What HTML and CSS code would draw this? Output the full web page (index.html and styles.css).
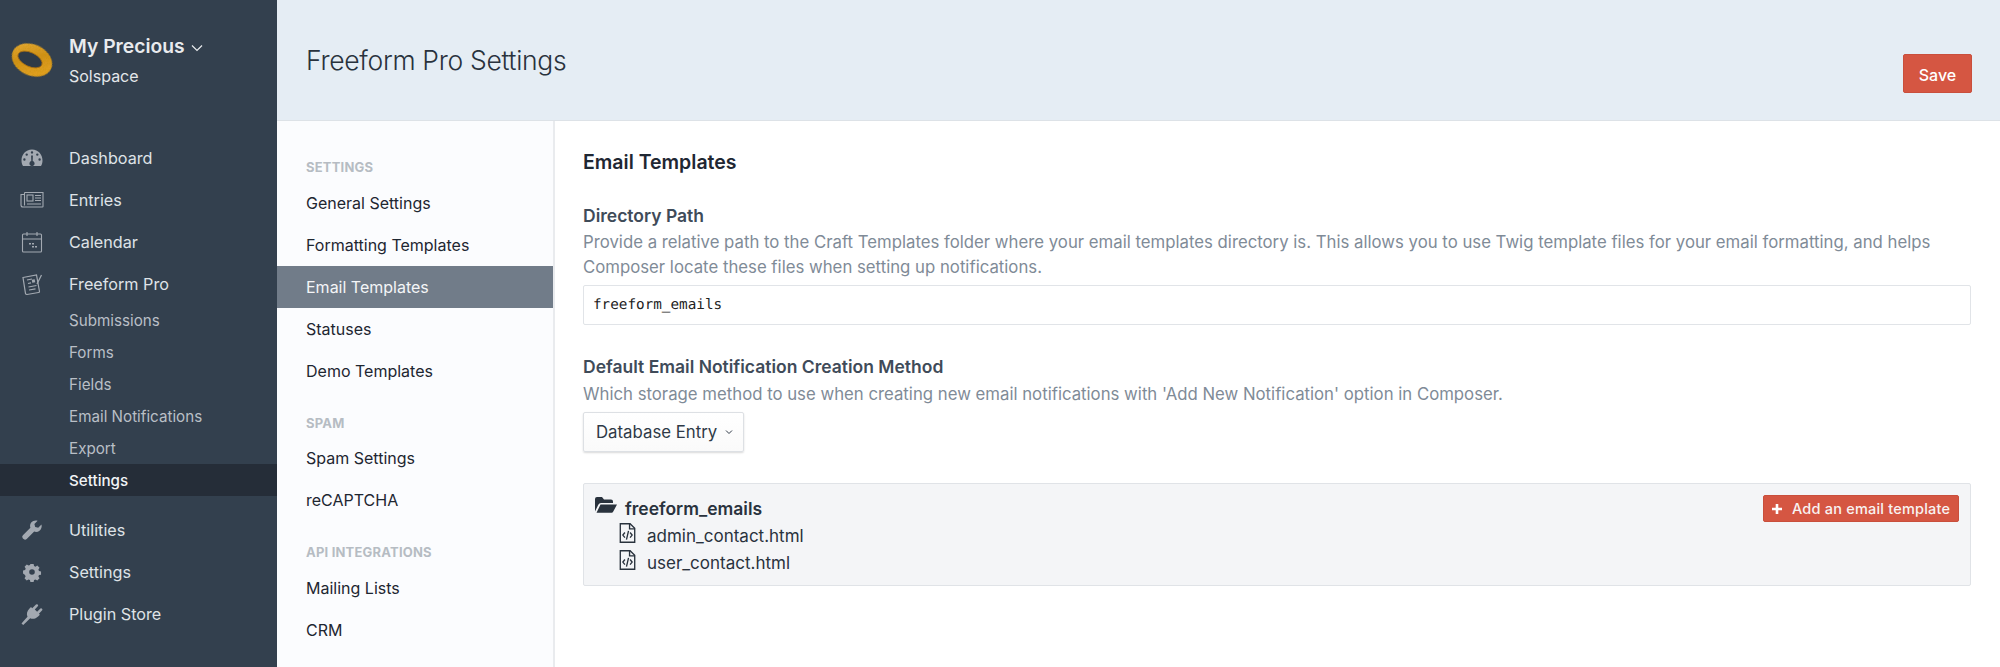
FILE: index.html
```html
<!DOCTYPE html>
<html lang="en">
<head>
<meta charset="utf-8">
<title>Freeform Pro Settings</title>
<link rel="stylesheet" href="styles.css">
</head>
<body>
<div class="app">
  <aside class="sidebar">
    <div class="brand">
      <svg class="ring" viewBox="0 0 45 42">
        <defs>
          <linearGradient id="gold" x1="0" y1="0" x2="1" y2="1"><stop offset="0" stop-color="#eeb23c"/><stop offset=".45" stop-color="#d0901c"/><stop offset=".8" stop-color="#e2a024"/><stop offset="1" stop-color="#b87a14"/></linearGradient>
          <filter id="grain" x="0" y="0" width="100%" height="100%"><feTurbulence type="fractalNoise" baseFrequency="1.100" numOctaves="2" seed="4"/><feColorMatrix values="0 0 0 0 .55  0 0 0 0 .3  0 0 0 0 0  0 0 0 1.400 -.55"/><feComposite in2="SourceAlpha" operator="in"/><feMerge><feMergeNode in="SourceGraphic"/><feMergeNode/></feMerge></filter>
        </defs>
        <ellipse cx="23" cy="19" rx="21" ry="15.500" transform="rotate(25 23 19)" fill="url(#gold)" filter="url(#grain)"/>
        <ellipse cx="21" cy="18.500" rx="13" ry="7" transform="rotate(25 21 18.500)" fill="#2e3a47" stroke="#a86f12" stroke-width=".8"/>
      </svg>
      <div class="brand-text">
        <div class="brand-name">My Precious <svg class="caret" viewBox="0 0 12 8"><path d="M1 1.500l5 5 5-5" fill="none" stroke="currentColor" stroke-width="1.200"/></svg></div>
        <div class="brand-org">Solspace</div>
      </div>
    </div>
    <nav class="main-nav">
      <a class="nav-item"><svg class="nav-icon" viewBox="0 0 24 24"><path fill="#a3a9b1" fill-rule="evenodd" d="M12 3.500C5.600 3.500 1.500 8.600 1.500 14.500c0 2 .5 3.700 1.200 5 .2.400.6.500 1 .5h16.600c.4 0 .8-.1 1-.5.7-1.300 1.200-3 1.200-5 0-5.900-4.100-11-10.500-11zM12 5.200a1.200 1.200 0 1 1 0 2.400 1.200 1.200 0 0 1 0-2.400zM6.700 7.400a1.200 1.200 0 1 1 0 2.400 1.200 1.200 0 0 1 0-2.400zM17.300 7.400a1.200 1.200 0 1 1 0 2.400 1.200 1.200 0 0 1 0-2.400zM4.400 12.300a1.200 1.200 0 1 1 0 2.400 1.200 1.200 0 0 1 0-2.400zM19.600 12.300a1.200 1.200 0 1 1 0 2.400 1.200 1.200 0 0 1 0-2.400zM12.900 9.500l-.2 5.600a2.600 2.600 0 1 1-1.400 0l-.2-5.600z"/></svg>Dashboard</a>
      <a class="nav-item"><svg class="nav-icon" viewBox="0 0 24 24"><g fill="none" stroke="#a3a9b1" stroke-width="1.100"><path d="M4.500 4.500h18.500v14a.5.5 0 0 1-.5.5H3a2 2 0 0 1-2-2V6.500h3.500"/><path d="M4.500 4.500v13"/><rect x="7" y="7" width="6" height="6"/><path d="M15 7.500h6M15 10h6M15 12.500h6M7 16h14"/></g></svg>Entries</a>
      <a class="nav-item"><svg class="nav-icon" viewBox="0 0 24 24"><g fill="none" stroke="#a3a9b1" stroke-width="1.100"><rect x="2.500" y="4" width="19" height="18" rx="1"/><path d="M2.500 9h19M7 2v4M17 2v4"/></g><path fill="#a3a9b1" d="M9 13h2v1.500H9zM12 13h2v1.500h-2zM12 16h2v1.500h-2zM15 16h2v1.500h-2z"/></svg>Calendar</a>
      <a class="nav-item"><svg class="nav-icon" viewBox="0 0 24 24"><g fill="none" stroke="#a3a9b1" stroke-width="1.200"><path d="M3 5.500L16.500 3l3 16.500a1 1 0 0 1-1 1L7 22.500a1.500 1.500 0 0 1-1.500-1z"/><path d="M7 8l5-1M8 11.500l3-.6M8.500 15l8-1.500M9 18l6.500-1.200"/><path d="M17 12L21.500 3"/></g><rect fill="#a3a9b1" x="12" y="7.500" width="3" height="3" transform="rotate(-10 13.500 9)"/></svg>Freeform Pro</a>
      <div class="sub-list">
        <a class="sub-item">Submissions</a>
        <a class="sub-item">Forms</a>
        <a class="sub-item">Fields</a>
        <a class="sub-item">Email Notifications</a>
        <a class="sub-item">Export</a>
        <a class="sub-item sub-active">Settings</a>
      </div>
      <a class="nav-item"><svg class="nav-icon" viewBox="0 0 24 24"><path fill="#a3a9b1" d="M21.500 6.500l-3.300 3.200-3-.8-.8-3L17.600 2.700c-2.300-.7-5 0-6.400 1.900-1.200 1.500-1.400 3.500-.8 5.200L2.900 17.300a2.200 2.200 0 0 0 0 3.100l.7.700a2.200 2.200 0 0 0 3.100 0l7.500-7.500c1.800.6 3.800.3 5.300-.9 1.900-1.500 2.600-4 2-6.200z"/></svg>Utilities</a>
      <a class="nav-item"><svg class="nav-icon" viewBox="-3 -3 30 30"><path fill="#a3a9b1" fill-rule="evenodd" d="M10 3h4l.6 2.600 1.700.7 2.300-1.400 2.800 2.800-1.400 2.300.7 1.700 2.600.6v4l-2.600.6-.7 1.700 1.400 2.300-2.800 2.800-2.300-1.400-1.700.7-.6 2.600h-4l-.6-2.600-1.700-.7-2.300 1.400-2.800-2.800 1.400-2.300-.7-1.700L.8 15v-4l2.600-.6.7-1.700-1.400-2.300 2.800-2.800 2.300 1.400 1.700-.7zM12 9.500a3.500 3.500 0 1 0 0 7 3.500 3.500 0 0 0 0-7z" transform="translate(0 -1)"/></svg>Settings</a>
      <a class="nav-item"><svg class="nav-icon" viewBox="0 0 24 24"><path fill="#a3a9b1" d="M16 2.500a1.300 1.300 0 0 1 2 1.600l-3.200 3.500 2.300 2.200 3.300-3.300a1.300 1.300 0 0 1 1.800 1.800l-3.300 3.400 1 1-1.500 1.500c-2.500 2.500-5.700 3.200-8.200 2L6.400 20l-3.200 3-1.700-1.600 3-3.400 3-3.200c-1.200-2.500-.5-5.700 2-8.200l1.500-1.500 1.200 1.100z"/></svg>Plugin Store</a>
    </nav>
  </aside>
  <div class="page">
    <header class="page-header">
      <h1 class="page-title">Freeform Pro Settings</h1>
      <button class="btn-save">Save</button>
    </header>
    <div class="page-body">
      <nav class="side-tabs">
        <div class="tab-heading">SETTINGS</div>
        <a class="tab">General Settings</a>
        <a class="tab">Formatting Templates</a>
        <a class="tab tab-active">Email Templates</a>
        <a class="tab">Statuses</a>
        <a class="tab">Demo Templates</a>
        <div class="tab-heading">SPAM</div>
        <a class="tab">Spam Settings</a>
        <a class="tab">reCAPTCHA</a>
        <div class="tab-heading tab-heading-api">API INTEGRATIONS</div>
        <a class="tab">Mailing Lists</a>
        <a class="tab">CRM</a>
      </nav>
      <main class="content">
        <h2 class="section-title">Email Templates</h2>
        <div class="field">
          <div class="field-label">Directory Path</div>
          <p class="field-help">Provide a relative path to the Craft Templates folder where your email templates directory is. This allows you to use Twig template files for your email formatting, and helps Composer locate these files when setting up notifications.</p>
          <input class="text-input" type="text" value="freeform_emails">
        </div>
        <div class="field">
          <div class="field-label">Default Email Notification Creation Method</div>
          <p class="field-help">Which storage method to use when creating new email notifications with 'Add New Notification' option in Composer.</p>
          <div class="select-btn">Database Entry <svg class="select-caret" viewBox="0 0 8 6"><path d="M1 1.500l3 3 3-3" fill="none" stroke="currentColor" stroke-width="1"/></svg></div>
        </div>
        <section class="files">
          <div class="files-list">
            <div class="folder"><svg class="folder-icon" viewBox="0 0 22 18"><path fill="#29323d" d="M0 3a2 2 0 0 1 2-2h5l2 2.500h7a2 2 0 0 1 2 2V7H6a3 3 0 0 0-2.700 1.700L0 15.500z"/><path fill="#29323d" d="M5.500 8.500H22l-4 7.500a1.500 1.500 0 0 1-1.300.8H1.500z"/></svg>freeform_emails</div>
            <div class="file"><svg class="file-icon" viewBox="0.300 0.300 15.400 19.400"><g fill="none" stroke="#29323d" stroke-width="1.300"><path d="M1 1h9.500L15 5.500V19H1z"/><path d="M10 1v5h5"/><path d="M5.500 9.500L3.500 12l2 2.500M10.500 9.500l2 2.500-2 2.500M9 8l-2 8.500"/></g></svg>admin_contact.html</div>
            <div class="file"><svg class="file-icon" viewBox="0.300 0.300 15.400 19.400"><g fill="none" stroke="#29323d" stroke-width="1.300"><path d="M1 1h9.500L15 5.500V19H1z"/><path d="M10 1v5h5"/><path d="M5.500 9.500L3.500 12l2 2.500M10.500 9.500l2 2.500-2 2.500M9 8l-2 8.500"/></g></svg>user_contact.html</div>
          </div>
          <button class="btn-add"><svg class="plus" viewBox="0 0 10 10"><path d="M5 0v10M0 5h10" stroke="#fff" stroke-width="2.600"/></svg>Add an email template</button>
        </section>
      </main>
    </div>
  </div>
</div>
</body>
</html>
```
FILE: styles.css
```css
* { box-sizing: border-box; }
html, body { margin: 0; height: 100%; overflow: hidden; }
body { font-family: Inter, "Noto Sans", sans-serif; background: #fff; color: #29323d; }
.app { display: flex; height: 667px; }
.sidebar { width: 277px; flex: none; background: #33404e; color: #e4e7ea; }
.brand { display: flex; height: 120px; padding: 25px 0 0 9px; }
.ring { width: 45px; height: 42px; flex: none; margin-top: 16px; }
.brand-text { margin-left: 15px; }
.brand-name { font-size: 19.300px; font-weight: 600; line-height: 42px; color: #e9ebee; white-space: nowrap; }
.caret { width: 12px; height: 8px; margin-left: 1px; vertical-align: 1px; }
.brand-org { font-size: 16px; font-weight: 400; line-height: 20px; margin-top: -1px; color: #e4e7ea; }
.main-nav { padding-top: 17px; }
.nav-item { display: flex; align-items: center; height: 42px; padding-left: 69px; position: relative; font-size: 16.200px; color: #dfe3e7; }
.nav-icon { position: absolute; left: 20px; top: 9px; width: 24px; height: 24px; }
.sub-list { margin: -1px 0 13px; }
.sub-item { display: flex; align-items: center; height: 32px; padding-left: 69px; font-size: 15.200px; color: #b9bfc6; }
.sub-active { background: #252d38; color: #f2f4f6; font-weight: 500; }
.page { flex: 1; min-width: 0; display: flex; flex-direction: column; }
.page-header { height: 121px; flex: none; background: #e5edf4; border-bottom: 1px solid #dde2e7; display: flex; justify-content: space-between; padding: 0 28px 0 29px; }
.page-title { margin: 41px 0 0; font-size: 26.500px; font-weight: 300; line-height: 38px; color: #29323d; letter-spacing: -.3px; }
.btn-save { margin-top: 54px; width: 69px; height: 39px; padding: 2px 0 0; background: #d55642; border: 1px solid #c94f3c; border-radius: 2px; color: #fff; font: 500 16px Inter, sans-serif; }
.page-body { flex: 1; display: flex; min-height: 0; }
.side-tabs { width: 278px; flex: none; background: #fbfcfe; border-right: 2px solid #e9ebee; padding-top: 29px; }
.tab-heading { font-size: 13px; font-weight: 700; color: #b6bcc3; line-height: 34px; height: 32px; padding-left: 29px; letter-spacing: .2px; }
.tab { display: flex; align-items: center; height: 42px; padding-left: 29px; font-size: 16px; color: #1e2631; }
.tab-active { background: #717c89; color: #f4f5f7; }
.tab + .tab-heading { margin-top: 14px; height: 31px; }
.tab + .tab-heading-api { height: 32px; }
.content { flex: 1; min-width: 0; padding: 27px 29px 0 28px; }
.section-title { margin: 0; font-size: 19.500px; font-weight: 600; line-height: 28px; color: #1f2733; }
.field { margin-top: 27px; }
.field + .field { margin-top: 29px; }
.field-label { font-size: 17.500px; font-weight: 600; line-height: 26px; color: #3f4b59; }
.field-help { margin: 1px 0 0; font-size: 16.750px; line-height: 25px; color: #7f8b97; }
.field + .field .field-help { margin-top: 2px; }
.text-input { display: block; width: 100%; height: 40px; margin-top: 5px; padding: 0 9px; border: 1px solid #e1e4e8; border-radius: 2px; background: #fff; font: 14.300px/24px "DejaVu Sans Mono", monospace; color: #222; text-rendering: geometricPrecision; }
.select-btn { display: inline-flex; align-items: center; height: 40px; margin-top: 5px; padding: 0 10px 0 12px; border: 1px solid #dde0e4; border-radius: 2px; background: linear-gradient(#fff, #fafafa); box-shadow: 0 1px 2px rgba(0,0,0,.15); font-size: 16.800px; color: #2f3a47; white-space: nowrap; }
.select-caret { width: 8px; height: 6px; margin-left: 8px; }
.files { display: flex; justify-content: space-between; align-items: flex-start; margin-top: 31px; height: 103px; border: 1px solid #e0e3e7; border-radius: 2px; background: #f4f5f7; padding: 10px 11px 0 11px; }
.folder { display: flex; align-items: center; height: 28px; font-size: 17.500px; font-weight: 600; color: #29323d; }
.folder-icon { width: 22px; height: 18px; margin-right: 8px; margin-top: -6px; }
.file { display: flex; align-items: center; height: 27px; padding-left: 24px; font-size: 17px; color: #29323d; }
.file-icon { width: 17px; height: 20px; margin-right: 11px; margin-top: -5px; }
.btn-add { display: flex; align-items: center; height: 27px; width: 196px; margin-top: 1px; padding: 0 0 0 8px; background: #d55642; border: 1px solid #c94f3c; border-radius: 2px; color: #f8f3f2; font: 500 14.500px Inter, sans-serif; letter-spacing: .2px; white-space: nowrap; }
.plus { width: 10px; height: 10px; margin-right: 10px; }
```
